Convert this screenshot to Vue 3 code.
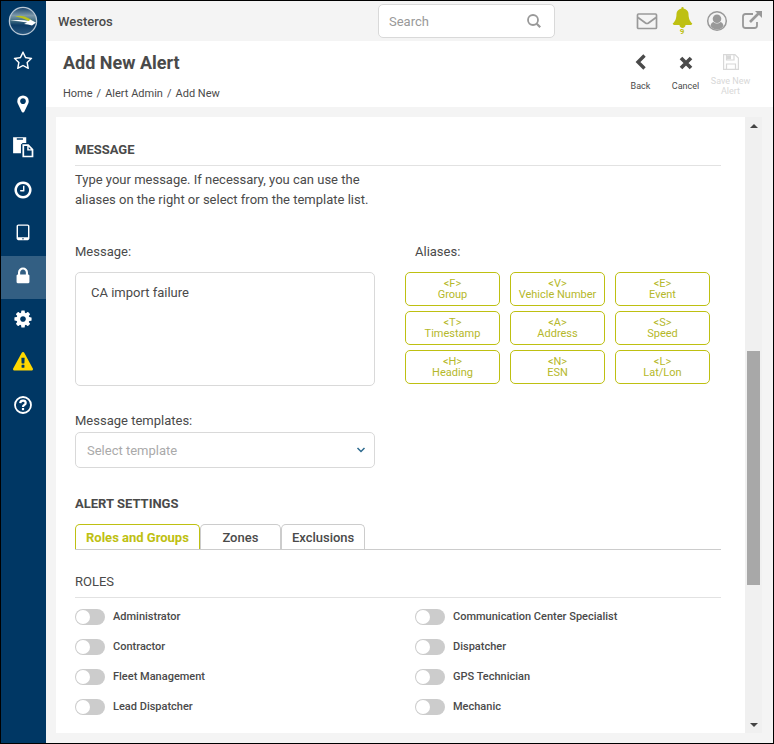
<template>
  <div class="app">
    <nav class="sidebar" aria-label="Main">
      <a href="#" class="logo" aria-label="Home">
        <svg width="30" height="30" viewBox="0 0 30 30">
          <defs>
            <linearGradient id="globe" x1="0" y1="0" x2="0" y2="1">
              <stop offset="0" stop-color="#17426b" />
              <stop offset="0.3" stop-color="#7d99aa" />
              <stop offset="0.5" stop-color="#3f6b80" />
              <stop offset="0.65" stop-color="#0d3c66" />
              <stop offset="1" stop-color="#28577f" />
            </linearGradient>
          </defs>
          <circle cx="15" cy="15" r="13.6" fill="url(#globe)" stroke="#b9c8d5" stroke-width="1.3" />
          <path d="M7 10.500Q15 8.500 21 12.500L24 14.500 20 15Q15 11.500 7 10.500z" fill="#b9c31c" />
          <path d="M2 14.500Q13 13.500 21 15L22 13.500 28 16.500 24 19.500 20 18.500 16 18 19 16.500Q11 15 2 14.500z" fill="#fff" />
        </svg>
      </a>
      <a
        v-for="item in menu"
        :key="item.name"
        href="#"
        class="item"
        :class="{ active: item.name === 'Security', warning: item.name === 'Warnings' }"
        :aria-label="item.name"
      >
        <svg :width="item.size" :height="item.size" viewBox="0 0 1792 1792">
          <path :d="item.path" fill="currentColor" fill-rule="evenodd" />
        </svg>
      </a>
      <a href="#" class="item" aria-label="Help">
        <svg width="20" height="20" viewBox="0 0 20 20" fill="none" stroke="currentColor">
          <circle cx="10" cy="10" r="8" stroke-width="1.8" />
          <path d="M7.200 8.200Q7.500 5.700 10 5.700 12.700 5.700 12.700 8 12.700 9.200 11.200 10 10 10.600 10 12" stroke-width="2.200" />
          <path d="M10 13v2.200" stroke-width="2.200" />
        </svg>
      </a>
    </nav>

    <div class="main">
      <header class="topbar">
        <span class="company">Westeros</span>
        <div class="search">
          <input type="search" placeholder="Search" aria-label="Search" />
          <svg width="16" height="16" viewBox="0 0 16 16" fill="none" stroke="#999">
            <circle cx="7" cy="7" r="5" stroke-width="1.800" />
            <path d="M10.700 10.700l3.500 3.500" stroke-width="2.200" />
          </svg>
        </div>
        <div class="tools">
          <button class="tool" aria-label="Mail">
            <svg width="22" height="20" viewBox="0 0 22 20" fill="none" stroke="#999" stroke-width="1.700">
              <rect x="1.500" y="3" width="19" height="14.500" rx="1" />
              <path d="M2 6.500L9.500 12Q11 13 12.500 12L20 6.500" />
            </svg>
          </button>
          <button class="tool bell" aria-label="Notifications">
            <svg width="21" height="21" viewBox="0 0 1792 1792">
              <path :d="bell" fill="#bec012" />
            </svg>
            <span>9</span>
          </button>
          <button class="tool" aria-label="Account">
            <svg width="22" height="22" viewBox="0 0 22 22">
              <circle cx="11" cy="11" r="9.300" fill="none" stroke="#999" stroke-width="1.500" />
              <circle cx="11" cy="8.700" r="4.300" fill="#999" />
              <path d="M4.500 16Q5 12.500 7.500 12 11 15 14.500 12 17 12.500 17.500 16 15 19.500 11 19.500 7 19.500 4.500 16z" fill="#999" />
            </svg>
          </button>
          <button class="tool" aria-label="Open in new window">
            <svg width="22" height="22" viewBox="0 0 22 22" fill="none" stroke="#999">
              <path d="M12 4H4.500Q2 4 2 6.500V15.500Q2 18 4.500 18H13.500Q16 18 16 15.500V12" stroke-width="1.800" />
              <path d="M9 12L18 3" stroke-width="2.600" />
              <path d="M14 1H21V8z" fill="#999" stroke="none" />
            </svg>
          </button>
        </div>
      </header>

      <section class="heading">
        <div>
          <h1>Add New Alert</h1>
          <div class="crumbs">
            <a href="#">Home</a>
            <span>/</span>
            <a href="#">Alert Admin</a>
            <span>/</span>
            <a href="#">Add New</a>
          </div>
        </div>
        <div class="actions">
          <button>
            <svg width="18" height="18" viewBox="0 0 18 18" fill="none" stroke="currentColor">
              <path d="M12.500 2.500L6 9l6.500 6.500" stroke-width="3.400" />
            </svg>
            Back
          </button>
          <button>
            <svg width="18" height="18" viewBox="0 0 18 18" fill="none" stroke="currentColor">
              <path d="M4 5l10 10M14 5L4 15" stroke-width="3.700" />
            </svg>
            Cancel
          </button>
          <button disabled>
            <svg width="18" height="18" viewBox="0 0 18 18" fill="none" stroke="currentColor" stroke-width="1.200">
              <path d="M1.600 1.600H13L16.400 5V16.400H1.600zM4.500 1.600V7H12V1.600M4.500 16.400V11H13.500V16.400" />
              <path d="M5 4.300h4" stroke-width="4" />
            </svg>
            Save New Alert
          </button>
        </div>
      </section>

      <div class="panel">
        <div class="content">
          <h2>MESSAGE</h2>
          <p class="intro">
            Type your message. If necessary, you can use the aliases on the right or select from the template list.
          </p>

          <div class="message">
            <div>
              <label for="message">Message:</label>
              <textarea id="message" v-model="message"></textarea>
              <label for="template">Message templates:</label>
              <div class="select">
                <select id="template" v-model="template">
                  <option value="">Select template</option>
                </select>
                <svg width="10" height="8" viewBox="0 0 10 8">
                  <path d="M1.500 2L5 5.500 8.500 2" fill="none" stroke="#2d6a8e" stroke-width="1.500" />
                </svg>
              </div>
            </div>
            <div>
              <div class="aliases-label">Aliases:</div>
              <div class="aliases">
                <button v-for="alias in aliases" :key="alias.code" @click="addAlias(alias.code)">
                  {{ alias.code }}<br />{{ alias.name }}
                </button>
              </div>
            </div>
          </div>

          <h3>ALERT SETTINGS</h3>
          <div class="tabs" role="tablist">
            <button
              v-for="t in tabs"
              :key="t"
              role="tab"
              :aria-selected="tab === t"
              :class="{ active: tab === t }"
              @click="tab = t"
            >
              {{ t }}
            </button>
          </div>

          <h4>ROLES</h4>
          <div class="roles">
            <label v-for="role in roles" :key="role">
              <input type="checkbox" :value="role" v-model="selectedRoles" />
              {{ role }}
            </label>
          </div>
        </div>
        <div class="scrollbar" aria-hidden="true">
          <i class="arrow up"></i>
          <i class="before"></i>
          <i class="thumb"></i>
          <i class="after"></i>
          <i class="arrow down"></i>
        </div>
      </div>
    </div>
  </div>
</template>

<script setup>
import { ref } from "vue";

const message = ref("CA import failure");
const template = ref("");
const tab = ref("Roles and Groups");
const selectedRoles = ref([]);

const tabs = ["Roles and Groups", "Zones", "Exclusions"];

const aliases = [
  { code: "<F>", name: "Group" },
  { code: "<V>", name: "Vehicle Number" },
  { code: "<E>", name: "Event" },
  { code: "<T>", name: "Timestamp" },
  { code: "<A>", name: "Address" },
  { code: "<S>", name: "Speed" },
  { code: "<H>", name: "Heading" },
  { code: "<N>", name: "ESN" },
  { code: "<L>", name: "Lat/Lon" },
];

const roles = [
  "Administrator",
  "Communication Center Specialist",
  "Contractor",
  "Dispatcher",
  "Fleet Management",
  "GPS Technician",
  "Lead Dispatcher",
  "Mechanic",
];

const addAlias = (code) => {
  message.value += code;
};

const bell =
  "M1728 1408q0 52-38 90t-90 38h-448q0 106-75 181t-181 75-181-75-75-181h-448q-52 0-90-38t-38-90q50-42 91-88t85-119.5 74.5-158.5 50-206 19.5-260q0-152 117-282.5t307-158.5q-8-19-8-39 0-40 28-68t68-28 68 28 28 68q0 20-8 39 190 28 307 158.5t117 282.5q0 139 19.5 260t50 206 74.5 158.5 85 119.5 91 88z";

const menu = [
  {
    name: "Favorites",
    size: 20,
    path: "M1201 1004l306-297-422-62-189-382-189 382-422 62 306 297-73 421 378-199 377 199zm527-357q0 22-26 48l-363 354 86 500q1 7 1 20 0 50-41 50-19 0-40-12l-449-236-449 236q-22 12-40 12-21 0-31.5-14.5t-10.5-35.5q0-6 2-20l86-500-364-354q-25-27-25-48 0-37 56-46l502-73 225-455q19-41 49-41t49 41l225 455 502 73q56 9 56 46z",
  },
  {
    name: "Map",
    size: 20,
    path: "M1152 640q0-106-75-181t-181-75-181 75-75 181 75 181 181 75 181-75 75-181zm256 0q0 109-33 179l-364 774q-16 33-47.500 52t-67.500 19-67.500-19-46.500-52l-365-774q-33-70-33-179 0-212 150-362t362-150 362 150 150 362z",
  },
  {
    name: "Reports",
    size: 22,
    path: "M90 100H1160V560H870L730 700V1400H90zM390 190V300H890V190zM850 680H1350L1740 1070V1740H850zM990 820V1600H1600V1190H1240V820zM1360 880V1070H1550z",
  },
  {
    name: "History",
    size: 20,
    path: "M1024 544v448q0 14-9 23t-23 9h-320q-14 0-23-9t-9-23v-64q0-14 9-23t23-9h224v-352q0-14 9-23t23-9h64q14 0 23 9t9 23zm416 352q0-148-73-273t-198-198-273-73-273 73-198 198-73 273 73 273 198 198 273 73 273-73 198-198 73-273zm224 0q0 209-103 385.500t-279.500 279.500-385.500 103-385.500-103-279.500-279.500-103-385.500 103-385.500 279.500-279.500 385.500-103 385.500 103 279.500 279.500 103 385.500z",
  },
  {
    name: "Devices",
    size: 20,
    path: "M960 1408q0-26-19-45t-45-19-45 19-19 45 19 45 45 19 45-19 19-45zm384-160v-960q0-13-9.500-22.500t-22.500-9.500h-832q-13 0-22.500 9.500t-9.500 22.500v960q0 13 9.500 22.500t22.500 9.500h832q13 0 22.500-9.500t9.500-22.500zm128-960v1088q0 66-47 113t-113 47h-832q-66 0-113-47t-47-113v-1088q0-66 47-113t113-47h832q66 0 113 47t47 113z",
  },
  {
    name: "Security",
    size: 20,
    path: "M640 768h512v-192q0-106-75-181t-181-75-181 75-75 181v192zm832 96v576q0 40-28 68t-68 28h-960q-40 0-68-28t-28-68v-576q0-40 28-68t68-28h32v-192q0-184 132-316t316-132 316 132 132 316v192h32q40 0 68 28t28 68z",
  },
  {
    name: "Settings",
    size: 20,
    path: "M1152 896q0-106-75-181t-181-75-181 75-75 181 75 181 181 75 181-75 75-181zm512-109v222q0 12-8 23t-20 13l-185 28q-19 54-39 91 35 50 107 138 10 12 10 25t-9 23q-27 37-99 108t-94 71q-12 0-26-9l-138-108q-44 23-91 38-16 136-29 186-7 28-36 28h-222q-14 0-24.500-8.500t-11.500-21.500l-28-184q-49-16-90-37l-141 107q-10 9-25 9-14 0-25-11-126-114-165-168-7-10-7-23 0-12 8-23 15-21 51-66.500t54-70.500q-27-50-41-99l-183-27q-13-2-21-12.500t-8-23.500v-222q0-12 8-23t19-13l186-28q14-46 39-92-40-57-107-138-10-12-10-24 0-10 9-23 26-36 98.500-107.500t94.500-71.500q13 0 26 10l138 107q44-23 91-38 16-136 29-186 7-28 36-28h222q14 0 24.500 8.500t11.500 21.500l28 184q49 16 90 37l142-107q9-9 24-9 13 0 25 10 129 119 165 170 7 8 7 22 0 12-8 23-15 21-51 66.500t-54 70.500q26 50 41 98l183 28q13 2 21 12.500t8 23.500z",
  },
  {
    name: "Warnings",
    size: 20,
    path: "M1024 1375v-190q0-14-9.500-23.500t-22.500-9.500h-192q-13 0-22.500 9.500t-9.500 23.500v190q0 14 9.500 23.500t22.500 9.500h192q13 0 22.500-9.500t9.500-23.500zm-2-374l18-459q0-12-10-19-13-11-24-11h-220q-11 0-24 11-10 7-10 21l17 457q0 10 10 16.500t24 6.500h185q14 0 23.500-6.500t10.500-16.500zm-14-934l768 1408q35 63-2 126-17 29-46.500 46t-63.500 17h-1536q-34 0-63.500-17t-46.500-46q-37-63-2-126l768-1408q17-31 47-49t65-18 65 18 47 49z",
  },
];
</script>

<style>
body {
  margin: 0;
}
</style>

<style scoped>
.app {
  display: flex;
  box-sizing: border-box;
  min-height: 100vh;
  border: 1px solid #000;
  background: #f4f4f4;
  color: #4a4a4a;
  font-family: Roboto, "Liberation Sans", sans-serif;
  font-size: 13px;
}
button,
input,
select,
textarea {
  font-family: inherit;
  color: inherit;
  box-sizing: border-box;
}
button {
  cursor: pointer;
}
svg {
  display: block;
  flex: none;
}
.sidebar {
  width: 45px;
  flex: none;
  background: #003764;
}
.logo,
.item {
  display: flex;
  align-items: center;
  justify-content: center;
  box-sizing: border-box;
  padding-right: 1px;
  color: #fff;
}
.logo {
  height: 40px;
}
.item {
  height: 43px;
  padding-bottom: 4px;
}
.active.item {
  background: #335f83;
}
.item.warning {
  color: #ffd800;
}
.main {
  flex: 1;
  min-width: 0;
  display: flex;
  flex-direction: column;
}
.topbar {
  display: flex;
  align-items: center;
  height: 40px;
  padding: 0 10px 0 12px;
}
.company {
  flex: 1;
  font-weight: 500;
}
.search {
  display: flex;
  align-items: center;
  box-sizing: border-box;
  width: 177px;
  height: 34px;
  padding: 0 12px 0 10px;
  border: 1px solid #d9d9d9;
  border-radius: 5px;
  background: #fff;
}
.search input {
  flex: 1;
  min-width: 0;
  padding: 0;
  border: 0;
  outline: 0;
  background: none;
  font-size: 13px;
}
.search input::placeholder {
  color: #999;
}
.tools {
  display: flex;
  align-items: center;
  gap: 13px;
  margin-left: 81px;
}
.tool {
  width: 22px;
  padding: 0;
  border: 0;
  background: none;
}
.bell {
  display: flex;
  flex-direction: column;
  align-items: center;
}
.bell span {
  color: #bec012;
  font-size: 8px;
  font-weight: 700;
  line-height: 8px;
}
.heading {
  display: flex;
  justify-content: space-between;
  height: 66px;
  padding: 0 20px 0 17px;
  background: #fff;
}
h1 {
  margin: 10px 0 12px;
  font-size: 18px;
  font-weight: 700;
  line-height: 24px;
}
.crumbs {
  display: flex;
  gap: 4px;
  font-size: 11px;
  line-height: 14px;
}
.crumbs a {
  color: inherit;
  text-decoration: none;
}
.actions {
  display: flex;
  padding-top: 12px;
}
.actions button {
  display: flex;
  flex-direction: column;
  align-items: center;
  gap: 10px;
  width: 45px;
  padding: 0;
  border: 0;
  background: none;
  font-size: 9px;
  line-height: 10px;
}
.actions button:disabled {
  gap: 5px;
  color: #d8d8d8;
}
.panel {
  display: flex;
  flex: 1;
  margin: 10px 11px 10px 10px;
  background: #fff;
}
.content {
  flex: 1;
  min-width: 0;
  padding: 23px 24px 18px 19px;
}
h2,
h3,
h4 {
  margin: 0;
  font-size: 13px;
  font-weight: 700;
  line-height: 20px;
}
h2 {
  padding-bottom: 5px;
  border-bottom: 1px solid #e2e2e2;
}
.intro {
  max-width: 300px;
  margin: 4px 0 32px;
  line-height: 20px;
}
.message {
  display: grid;
  grid-template-columns: 300px 1fr;
  gap: 30px;
}
.message label,
.aliases-label {
  display: block;
  line-height: 20px;
}
.message textarea {
  display: block;
  width: 100%;
  height: 114px;
  margin: 10px 0 25px;
  padding: 10px 15px;
  border: 1px solid #d9d9d9;
  border-radius: 5px;
  outline: 0;
  resize: none;
  font-size: 13px;
  line-height: 20px;
}
.select {
  position: relative;
  margin-top: 1px;
}
.select select {
  display: block;
  width: 100%;
  height: 36px;
  padding: 0 30px 0 11px;
  border: 1px solid #d9d9d9;
  border-radius: 5px;
  appearance: none;
  background: #fff;
  color: #aaa;
  font-size: 13px;
}
.select svg {
  position: absolute;
  top: 14px;
  right: 9px;
  pointer-events: none;
}
.aliases-label {
  margin-bottom: 10px;
  padding-left: 10px;
}
.aliases {
  display: grid;
  grid-template-columns: repeat(3, 95px);
  gap: 5px 10px;
}
.aliases button {
  height: 34px;
  padding: 0;
  border: 1px solid #bec012;
  border-radius: 5px;
  background: #fff;
  color: #b5b82a;
  font-size: 11px;
  line-height: 11px;
}
h3 {
  margin-top: 26px;
}
.tabs {
  display: flex;
  margin-top: 10px;
  border-bottom: 1px solid #ccc;
}
.tabs button {
  min-width: 81px;
  height: 25px;
  padding: 0 10px;
  border: 1px solid #ccc;
  border-bottom: 0;
  border-radius: 5px 5px 0 0;
  background: #fff;
  font-size: 13px;
  font-weight: 500;
}
.tabs .active {
  border-color: #bec012;
  color: #bec012;
  font-weight: 700;
}
h4 {
  margin-top: 22px;
  padding-bottom: 5px;
  border-bottom: 1px solid #e2e2e2;
  font-weight: 400;
}
.roles {
  display: grid;
  grid-template-columns: 1fr 1fr;
  gap: 14px 34px;
  margin-top: 11px;
}
.roles label {
  display: flex;
  align-items: center;
  gap: 8px;
  font-size: 11px;
  font-weight: 500;
  line-height: 16px;
}
.roles input {
  display: flex;
  flex: none;
  width: 30px;
  height: 16px;
  margin: 0;
  padding: 1px;
  border-radius: 8px;
  appearance: none;
  background: #ccc;
}
.roles input::before {
  content: "";
  width: 14px;
  height: 14px;
  border-radius: 50%;
  background: #fff;
}
.roles input:checked {
  justify-content: flex-end;
  background: #bec012;
}
.scrollbar {
  display: flex;
  flex-direction: column;
  align-items: center;
  width: 17px;
  background: #f0f0f0;
}
.arrow {
  display: flex;
  align-items: center;
  height: 17px;
}
.arrow::before {
  content: "";
  border: 4px solid transparent;
}
.up::before {
  border-top: 0;
  border-bottom-color: #444;
}
.down::before {
  border-bottom: 0;
  border-top-color: #444;
}
.before {
  flex: 217;
}
.thumb {
  flex: 234;
  width: 13px;
  background: #a8a8a8;
}
.after {
  flex: 131;
}
</style>
